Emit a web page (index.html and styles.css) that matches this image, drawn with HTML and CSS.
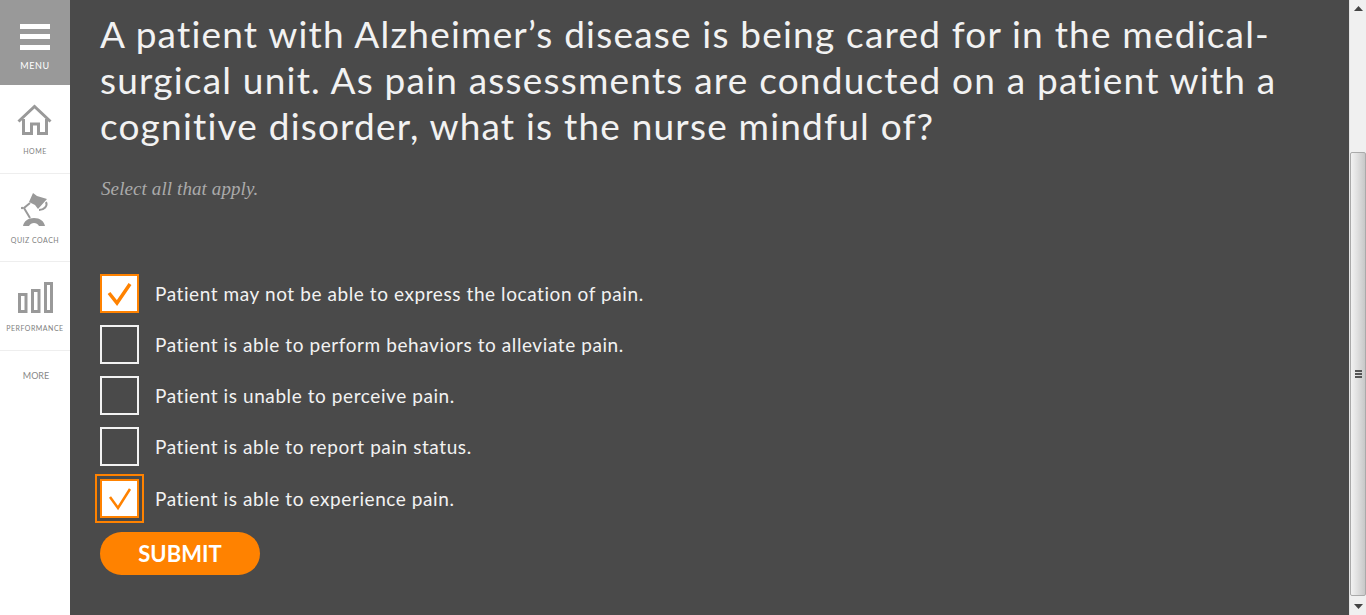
FILE: index.html
```html
<!DOCTYPE html>
<html lang="en">
<head>
<meta charset="utf-8">
<title>Quiz</title>
<link rel="stylesheet" href="styles.css">
</head>
<body>
<div class="app">
  <nav class="sidebar">
    <div class="menu">
      <div class="bars"><span></span><span></span><span></span></div>
      <div class="menu-label">MENU</div>
    </div>
    <div class="nav-item home">
      <svg width="36" height="32" viewBox="0 0 36 32" fill="none" stroke="#999" stroke-width="3"><path d="M1.500 17.500 17.500 2.500l16 15"/><path d="M6.500 15v14.500h8V20h7v9.500h8V15"/></svg>
      <div class="nav-label">HOME</div>
    </div>
    <div class="nav-item coach">
      <svg width="28" height="35" viewBox="0 0 28 35"><path fill="#999" d="M12 1l4 3 10 3-9 10-3-4-6-3z"/><path fill="none" stroke="#999" stroke-width="2" d="M25 10c2 4-2 8-7 8"/><path fill="none" stroke="#999" stroke-width="2" d="M9 11 3 16l6 10"/><circle cx="1" cy="16" r="1.200" fill="#999"/><path fill="#999" d="M2 34c1-5 5-8 11-8s10 3 11 8h-6c-1-2-3-3-5-3s-4 1-5 3z"/></svg>
      <div class="nav-label">QUIZ COACH</div>
    </div>
    <div class="nav-item perf">
      <svg width="35" height="31" viewBox="0 0 35 31" fill="none" stroke="#999" stroke-width="3"><rect x="1.500" y="12.500" width="6.500" height="17"/><rect x="14.500" y="8.500" width="6.500" height="21"/><rect x="27.500" y="1.500" width="6" height="28"/></svg>
      <div class="nav-label">PERFORMANCE</div>
    </div>
    <div class="more">MORE</div>
  </nav>
  <main class="content">
    <h1 class="question">A patient with Alzheimer’s disease is being cared for in the medical-surgical unit. As pain assessments are conducted on a patient with a cognitive disorder, what is the nurse mindful of?</h1>
    <p class="hint">Select all that apply.</p>
    <ul class="options">
      <li class="option"><span class="box checked"><svg class="tick" width="26" height="24" viewBox="0 0 26 24" fill="none" stroke="#ff8200" stroke-width="3.500"><path d="M2 11l8 10L23 2"/></svg></span><span class="option-text">Patient may not be able to express the location of pain.</span></li>
      <li class="option"><span class="box"></span><span class="option-text">Patient is able to perform behaviors to alleviate pain.</span></li>
      <li class="option"><span class="box"></span><span class="option-text">Patient is unable to perceive pain.</span></li>
      <li class="option"><span class="box"></span><span class="option-text">Patient is able to report pain status.</span></li>
      <li class="option focused"><span class="box checked"><svg class="tick" width="26" height="24" viewBox="0 0 26 24" fill="none" stroke="#ff8200" stroke-width="2.500"><path d="M3 10l8 11L23 2"/></svg></span><span class="option-text">Patient is able to experience pain.</span></li>
    </ul>
    <button class="submit" type="button">SUBMIT</button>
  </main>
  <div class="scrollbar">
    <div class="arrow"><svg width="9" height="5" viewBox="0 0 9 5"><path d="M4.500 0 9 5H0z" fill="#444"/></svg></div>
    <div class="track">
      <div class="thumb"><div class="grip"><span></span><span></span><span></span></div></div>
    </div>
    <div class="arrow"><svg width="9" height="5" viewBox="0 0 9 5"><path d="M0 0h9L4.500 5z" fill="#444"/></svg></div>
  </div>
</div>
</body>
</html>
```
FILE: styles.css
```css
* { box-sizing: border-box; }
html, body { margin: 0; height: 100%; overflow: hidden; }
body { font-family: Lato, "Open Sans", sans-serif; background: #4a4a4a; }
.app { display: flex; height: 615px; }

.sidebar { width: 70px; flex: none; background: #fff; display: flex; flex-direction: column; }
.menu { height: 85px; background: #999; display: flex; flex-direction: column; align-items: center; padding-top: 24px; }
.bars { width: 30px; display: flex; flex-direction: column; gap: 5px; }
.bars span { height: 5px; background: #fff; }
.bars span:last-child { height: 5px; margin-top: 1px; }
.menu-label { margin-top: 10px; color: #fff; font-size: 9px; line-height: 12px; letter-spacing: .6px; }
.nav-item { border-bottom: 1px solid #eee; display: flex; flex-direction: column; align-items: center; color: #888; }
.home { height: 89px; padding-top: 19px; }
.coach { height: 88px; padding-top: 18px; }
.perf { height: 89px; padding-top: 20px; }
.home svg, .perf svg { flex: none; }
.nav-label { font-size: 7px; line-height: 10px; letter-spacing: .5px; color: #808080; white-space: nowrap; }
.home .nav-label { margin-top: 10px; }
.coach .nav-label { margin-top: 8px; }
.perf .nav-label { margin-top: 10px; }
.more { font-size: 9px; line-height: 12px; text-align: center; color: #888; margin-top: 19px; padding-left: 2px; }

.content { flex: 1; min-width: 0; padding: 11px 60px 0 30px; color: #f2f2f2; }
.question { margin: 0; font-weight: 400; font-size: 37px; line-height: 46px; letter-spacing: 1.2px; }
.hint { margin: 28px 0 0; padding-left: 1px; font-family: "Liberation Serif", serif; font-style: italic; font-size: 19px; line-height: 24px; letter-spacing: .1px; color: #aaa; }
.options { list-style: none; margin: 73px 0 0; padding: 0; }
.option { display: flex; align-items: center; height: 39px; margin-bottom: 12px; }
.option:last-child { margin-bottom: 0; margin-top: 13px; }
.box { width: 39px; height: 39px; flex: none; border: 2px solid #f2f2f2; display: flex; align-items: center; justify-content: center; }
.box.checked { background: #fff; border-color: #ff8200; }
.focused .box { outline: 2px solid #ff8200; outline-offset: 3px; }
.option-text { margin-left: 16px; font-size: 19px; letter-spacing: .58px; white-space: nowrap; }
.submit { display: block; margin-top: 14px; width: 160px; height: 43px; border: 0; border-radius: 22px; background: #ff8200; color: #fff; font: 700 22px Lato, sans-serif; padding: 0; }

.scrollbar { width: 17px; flex: none; background: #f0f0f0; display: flex; flex-direction: column; border-left: 1px solid #e4e4e4; }
.arrow { height: 17px; flex: none; display: flex; align-items: center; justify-content: center; }
.track { flex: 1; display: flex; flex-direction: column; justify-content: flex-end; padding-bottom: 2px; }
.thumb { height: 444px; border: 1px solid #aaa; border-radius: 2px; background: linear-gradient(90deg, #f2f2f2, #e2e2e2 40%, #c8c8c8); display: flex; align-items: center; justify-content: center; }
.grip { display: flex; flex-direction: column; gap: 1px; width: 7px; }
.grip span { height: 2px; background: #555; }
```
